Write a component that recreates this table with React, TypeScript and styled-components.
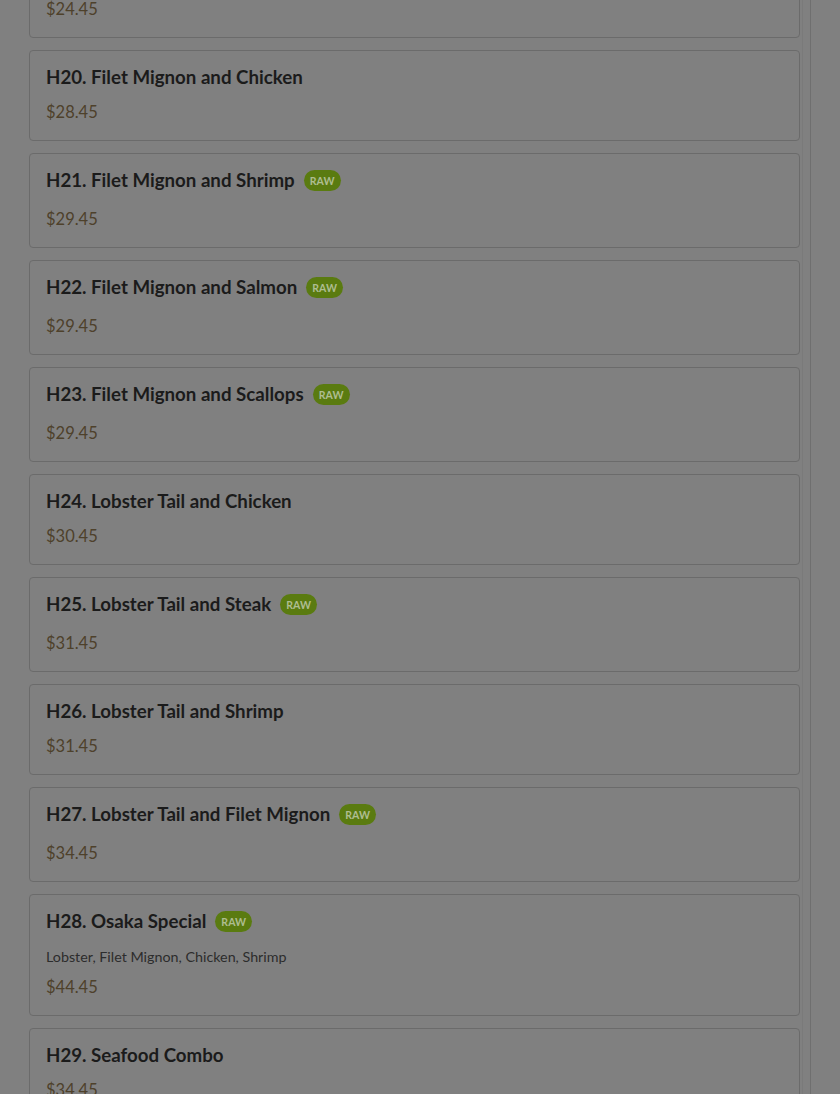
import React from 'react'
import styled, { createGlobalStyle } from 'styled-components'

// Menu list shown behind a dimmed backdrop (colours are the dimmed values)

interface MenuItem {
  code: string
  name: string
  price: string
  raw?: boolean
  description?: string
}

const items: MenuItem[] = [
  { code: 'H19', name: 'Filet Mignon', price: '$24.45' },
  { code: 'H20', name: 'Filet Mignon and Chicken', price: '$28.45' },
  { code: 'H21', name: 'Filet Mignon and Shrimp', price: '$29.45', raw: true },
  { code: 'H22', name: 'Filet Mignon and Salmon', price: '$29.45', raw: true },
  { code: 'H23', name: 'Filet Mignon and Scallops', price: '$29.45', raw: true },
  { code: 'H24', name: 'Lobster Tail and Chicken', price: '$30.45' },
  { code: 'H25', name: 'Lobster Tail and Steak', price: '$31.45', raw: true },
  { code: 'H26', name: 'Lobster Tail and Shrimp', price: '$31.45' },
  { code: 'H27', name: 'Lobster Tail and Filet Mignon', price: '$34.45', raw: true },
  {
    code: 'H28',
    name: 'Osaka Special',
    price: '$44.45',
    raw: true,
    description: 'Lobster, Filet Mignon, Chicken, Shrimp',
  },
  { code: 'H29', name: 'Seafood Combo', price: '$34.45' },
  { code: 'H30', name: 'Seafood Deluxe', price: '$38.45' },
]

const GlobalStyle = createGlobalStyle`
  html, body {
    margin: 0;
    padding: 0;
    background: #808080;
    overflow: hidden;
  }
  body {
    font-family: Lato, "Noto Sans", sans-serif;
    -webkit-font-smoothing: antialiased;
  }
`

const Page = styled.div`
  display: flex;
  height: 1094px;
  overflow: hidden;
`

const Main = styled.main`
  width: 811px;
  box-sizing: border-box;
  padding-left: 29px;
  border-right: 1px solid #6f6f6f;
  flex-shrink: 0;
`

const Column = styled.div`
  width: 774px;
  box-sizing: border-box;
  padding-right: 3px;
  border-right: 1px solid #7a7a7a;
  min-height: 100%;
`

const List = styled.div`
  display: flex;
  flex-direction: column;
  gap: 12px;
  margin-top: -53px;
`

const Card = styled.div`
  box-sizing: border-box;
  width: 771px;
  padding: 16px;
  border: 1px solid #6b6b6b;
  border-radius: 4px;
  background: #808080;
`

const TitleRow = styled.div<{ $raw?: boolean }>`
  display: flex;
  align-items: flex-start;
  gap: 9px;
  min-height: ${(p) => (p.$raw ? '25px' : '21px')};
  margin-bottom: 12px;
`

const Title = styled.div`
  font-size: 18.7px;
  line-height: 21px;
  font-weight: 700;
  color: #1b1b1b;
`

const RawBadge = styled.span`
  display: inline-flex;
  align-items: center;
  justify-content: center;
  height: 21px;
  padding: 0 6px;
  margin-top: 0;
  border-radius: 11px;
  background: #5a7b10;
  color: #aebd90;
  font-size: 10.5px;
  font-weight: 700;
  letter-spacing: 0.1px;
`

const Description = styled.div`
  font-size: 14.3px;
  line-height: 18px;
  color: #2c2c2c;
  margin-bottom: 9px;
`

const Price = styled.div`
  font-size: 16.5px;
  line-height: 24px;
  color: #4e412b;
`

const Aside = styled.aside`
  flex: 1;
  background: #808080;
`

function MenuCard({ item }: { item: MenuItem }) {
  return (
    <Card>
      <TitleRow $raw={item.raw}>
        <Title>
          {item.code}. {item.name}
        </Title>
        {item.raw && <RawBadge>RAW</RawBadge>}
      </TitleRow>
      {item.description && <Description>{item.description}</Description>}
      <Price>{item.price}</Price>
    </Card>
  )
}

export default function App() {
  return (
    <>
      <GlobalStyle />
      <Page>
        <Main>
          <Column>
            <List>
              {items.map((item) => (
                <MenuCard key={item.code} item={item} />
              ))}
            </List>
          </Column>
        </Main>
        <Aside />
      </Page>
    </>
  )
}
